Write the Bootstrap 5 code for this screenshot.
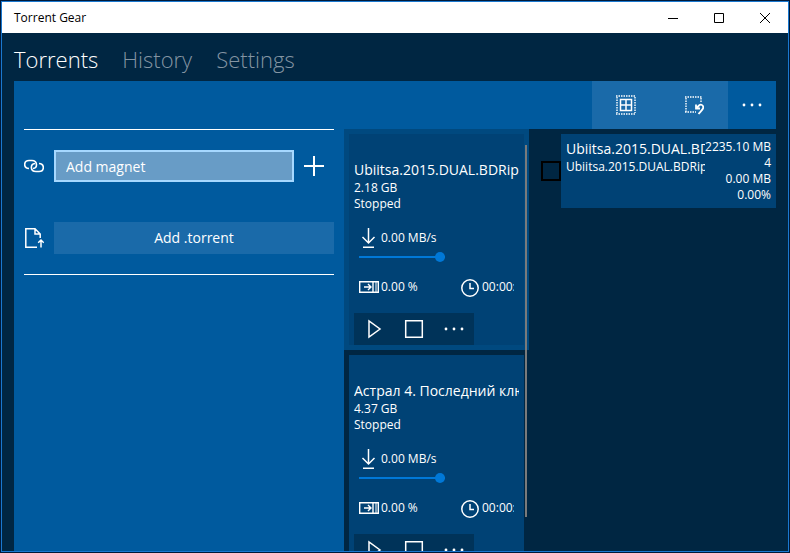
<!DOCTYPE html>
<html lang="en">
<head>
<meta charset="utf-8">
<meta name="viewport" content="width=device-width, initial-scale=1">
<title>Torrent Gear</title>
<link href="https://cdn.jsdelivr.net/npm/bootstrap@5.3.0/dist/css/bootstrap.min.css" rel="stylesheet">
<style>
:root{--night:#002642;--sea:#005a9e;--tile:#004275;--accent:#0078d7}
body{font-family:"Open Sans","Noto Sans",sans-serif;font-size:12px;line-height:16px;color:#fff;background:#001a3a;padding:1px}
.app-window{border:1px solid #1a78cf;background:var(--night)}
.title-bar{height:31px;background:#fff;color:#000;padding-left:12px}
.caption-btn{width:46px;height:31px}
.plain-btn{border:0;background:none;color:inherit;padding:0;display:flex;align-items:center;justify-content:center}
.tabs{height:48px;padding:10px 12px 0;gap:24px;font-size:22px;line-height:32px;font-weight:300}
.tabs a{color:#8495a3;text-decoration:none}
.tabs a.active{color:#fff}
.frame{margin:0 12px;background:var(--sea)}
.command-bar{height:48px}
.command-bar .tool{width:68px;background:#1a6aa9}
.command-bar .more{width:48px}
.add-pane{width:330px;padding:0 10px}
.add-box{border-top:1px solid #fff;border-bottom:1px solid #fff;padding:20px 0;display:flex;flex-direction:column;gap:40px}
.add-row{display:flex;align-items:center;gap:10px;height:32px}
.field{font-size:14px;line-height:20px;height:32px;border:2px solid #a6d8ff;background:#689cc6;color:#fff;padding:0 10px;min-width:0;border-radius:0}
.field::placeholder{color:#fff;opacity:1}
.field:focus{outline:0}
.wide-btn{height:32px;background:#1a6aa9;font-size:14px}
.plus{width:40px;height:32px;margin-left:-10px}
.list-pane{width:185px;background:var(--night)}
.torrent{padding:5px}
.torrent.chosen{background:#00497f}
.torrent-tile{background:var(--tile);padding:26px 5px 0}
.clip{overflow:hidden;white-space:nowrap}
.name{font-size:14px;line-height:20px}
.speed{padding:13px 5px 0;gap:2px;height:39px}
.meter{display:block;width:86px;height:10px;margin:1px 0 0 5px;appearance:none;background:linear-gradient(var(--accent),var(--accent)) center/100% 2px no-repeat}
.meter::-webkit-slider-thumb{appearance:none;width:10px;height:10px;border-radius:50%;background:var(--accent)}
.stats{margin:15px 5px 0;height:20px;gap:2px}
.stats .left{width:100px;gap:2px}
.stats .right{gap:1px}
.actions{width:120px;height:32px;background:#003359;margin-top:16px}
.actions .plain-btn{width:40px}
.scroll-mark{position:absolute;right:2px;top:16px;bottom:34px;width:2px;background:#7a7a7a}
.file-pane{background:var(--night);padding:5px 0 0 12px}
.tick{appearance:none;width:20px;height:20px;border:2px solid #000;margin:0;flex:none}
.file-tile{background:var(--tile);padding:5px;height:74px}
svg{display:block;fill:none;stroke:currentColor;flex:none}
</style>
</head>
<body class="vh-100">
<div class="app-window h-100 d-flex flex-column overflow-hidden">
  <header class="title-bar d-flex align-items-center flex-shrink-0">
    <span class="flex-grow-1">Torrent Gear</span>
    <button class="plain-btn caption-btn" aria-label="Minimize"><svg width="10" height="10"><path d="M0 5.5H10"/></svg></button>
    <button class="plain-btn caption-btn" aria-label="Maximize"><svg width="10" height="10"><path d="M.5.5H9.5V9.5H.5Z"/></svg></button>
    <button class="plain-btn caption-btn" aria-label="Close"><svg width="10" height="10"><path d="M0 0L10 10M10 0L0 10"/></svg></button>
  </header>
  <nav class="tabs d-flex flex-shrink-0">
    <a class="active" href="#torrents">Torrents</a>
    <a href="#history">History</a>
    <a href="#settings">Settings</a>
  </nav>
  <main class="frame flex-grow-1 d-flex flex-column overflow-hidden">
    <div class="command-bar d-flex justify-content-end flex-shrink-0">
      <button class="plain-btn tool" aria-label="Select all"><svg width="20" height="20"><path d="M0 1H20M0 19H20M1 2V18M19 2V18" stroke-width="1.4" stroke-dasharray="1.5 1"/><path d="M4.5 4.5H15.5V15.5H4.5ZM10 4.5V15.5M4.5 10H15.5" stroke-width="1.5"/></svg></button>
      <button class="plain-btn tool" aria-label="Clear selection"><svg width="20" height="20"><path d="M1 2H18M2 3V18M17 3V8M1 17H12" stroke-width="1.4" stroke-dasharray="1.5 1"/><path d="M12 9.500V13.500H16M12.500 13L15 10.500C17 8.500 20 10.500 19 13.500C18 15.500 16 17 14.500 19" stroke-width="1.8"/></svg></button>
      <button class="plain-btn more" aria-label="More"><svg width="20" height="4"><g fill="currentColor" stroke="none"><circle cx="2" cy="2" r="1.400"/><circle cx="10" cy="2" r="1.400"/><circle cx="18" cy="2" r="1.400"/></g></svg></button>
    </div>
    <div class="d-flex flex-grow-1 overflow-hidden">
      <section class="add-pane flex-shrink-0">
        <div class="add-box">
          <div class="add-row">
            <svg width="20" height="20" stroke-width="1.6"><path d="M5 12.500C-1 12-.5 4.500 5 4.500H8C13.500 4.500 14 12 9 12.500M15 7.500C21 8 20.500 15.500 15 15.500H12C6 15.500 6 8 11 7.500"/></svg>
            <input class="field flex-grow-1" type="text" placeholder="Add magnet" aria-label="Add magnet">
            <button class="plain-btn plus" aria-label="Add"><svg width="20" height="20"><path d="M0 10H20M10 0V20" stroke-width="2"/></svg></button>
          </div>
          <div class="add-row">
            <svg width="20" height="20" stroke-width="1.500"><path d="M13 19.200H1.800V.8H11L16.200 6V10M11 1V6H16M17 19.500V12M14.200 14.800L17 12L19.800 14.800"/></svg>
            <button class="plain-btn wide-btn flex-grow-1">Add .torrent</button>
          </div>
        </div>
      </section>
      <section class="list-pane flex-shrink-0 position-relative overflow-hidden">
        <article class="torrent chosen">
          <div class="torrent-tile">
            <div class="name clip">Ubiitsa.2015.DUAL.BDRip-AVC</div>
            <div>2.18 GB</div>
            <div>Stopped</div>
            <div class="speed d-flex align-items-center">
              <svg width="20" height="20" stroke-width="1.500"><path d="M9.500 0V15M3.500 9L9.500 15L15.500 9M4 19.200H15"/></svg>
              <span>0.00 MB/s</span>
            </div>
            <input class="meter" type="range" min="0" max="100" value="100" aria-label="Speed limit">
            <div class="stats d-flex align-items-center">
              <div class="left d-flex align-items-center flex-shrink-0">
                <svg width="20" height="12" stroke-width="1.400"><path d="M.7.7H19.300V11.300H.7ZM14 .7V11.300M5 6H12M9 3L12 6L9 9"/><path d="M17 .7V11.300" stroke-width="1"/></svg>
                <span>0.00 %</span>
              </div>
              <div class="right d-flex align-items-center clip">
                <svg width="20" height="20" stroke-width="1.500"><circle cx="9" cy="11" r="8.200"/><path d="M9 6V11.500H13"/></svg>
                <span>00:00:00</span>
              </div>
            </div>
            <div class="actions d-flex">
              <button class="plain-btn" aria-label="Start"><svg width="20" height="20" stroke-width="1.500"><path d="M5 2V18L16 10Z"/></svg></button>
              <button class="plain-btn" aria-label="Stop"><svg width="20" height="20" stroke-width="1.500"><path d="M1.700 1.700H18.300V18.300H1.700Z"/></svg></button>
              <button class="plain-btn" aria-label="More"><svg width="20" height="4"><g fill="currentColor" stroke="none"><circle cx="2" cy="2" r="1.400"/><circle cx="10" cy="2" r="1.400"/><circle cx="18" cy="2" r="1.400"/></g></svg></button>
            </div>
          </div>
        </article>
        <article class="torrent">
          <div class="torrent-tile">
            <div class="name clip">Астрал 4. Последний ключ</div>
            <div>4.37 GB</div>
            <div>Stopped</div>
            <div class="speed d-flex align-items-center">
              <svg width="20" height="20" stroke-width="1.500"><path d="M9.500 0V15M3.500 9L9.500 15L15.500 9M4 19.200H15"/></svg>
              <span>0.00 MB/s</span>
            </div>
            <input class="meter" type="range" min="0" max="100" value="100" aria-label="Speed limit">
            <div class="stats d-flex align-items-center">
              <div class="left d-flex align-items-center flex-shrink-0">
                <svg width="20" height="12" stroke-width="1.400"><path d="M.7.7H19.300V11.300H.7ZM14 .7V11.300M5 6H12M9 3L12 6L9 9"/><path d="M17 .7V11.300" stroke-width="1"/></svg>
                <span>0.00 %</span>
              </div>
              <div class="right d-flex align-items-center clip">
                <svg width="20" height="20" stroke-width="1.500"><circle cx="9" cy="11" r="8.200"/><path d="M9 6V11.500H13"/></svg>
                <span>00:00:00</span>
              </div>
            </div>
            <div class="actions d-flex">
              <button class="plain-btn" aria-label="Start"><svg width="20" height="20" stroke-width="1.500"><path d="M5 2V18L16 10Z"/></svg></button>
              <button class="plain-btn" aria-label="Stop"><svg width="20" height="20" stroke-width="1.500"><path d="M1.700 1.700H18.300V18.300H1.700Z"/></svg></button>
              <button class="plain-btn" aria-label="More"><svg width="20" height="4"><g fill="currentColor" stroke="none"><circle cx="2" cy="2" r="1.400"/><circle cx="10" cy="2" r="1.400"/><circle cx="18" cy="2" r="1.400"/></g></svg></button>
            </div>
          </div>
        </article>
        <div class="scroll-mark"></div>
      </section>
      <section class="file-pane flex-grow-1 overflow-hidden">
        <div class="d-flex align-items-center">
          <input class="tick" type="checkbox" aria-label="Ubiitsa.2015.DUAL.BDRip">
          <div class="file-tile d-flex flex-grow-1 overflow-hidden">
            <div class="flex-grow-1 overflow-hidden">
              <div class="name clip">Ubiitsa.2015.DUAL.BDRip-AVC</div>
              <div class="clip">Ubiitsa.2015.DUAL.BDRip-AVC</div>
            </div>
            <div class="text-end text-nowrap">
              <div>2235.10 MB</div>
              <div>4</div>
              <div>0.00 MB</div>
              <div>0.00%</div>
            </div>
          </div>
        </div>
      </section>
    </div>
  </main>
</div>
<script src="https://cdn.jsdelivr.net/npm/bootstrap@5.3.0/dist/js/bootstrap.bundle.min.js"></script>
</body>
</html>
